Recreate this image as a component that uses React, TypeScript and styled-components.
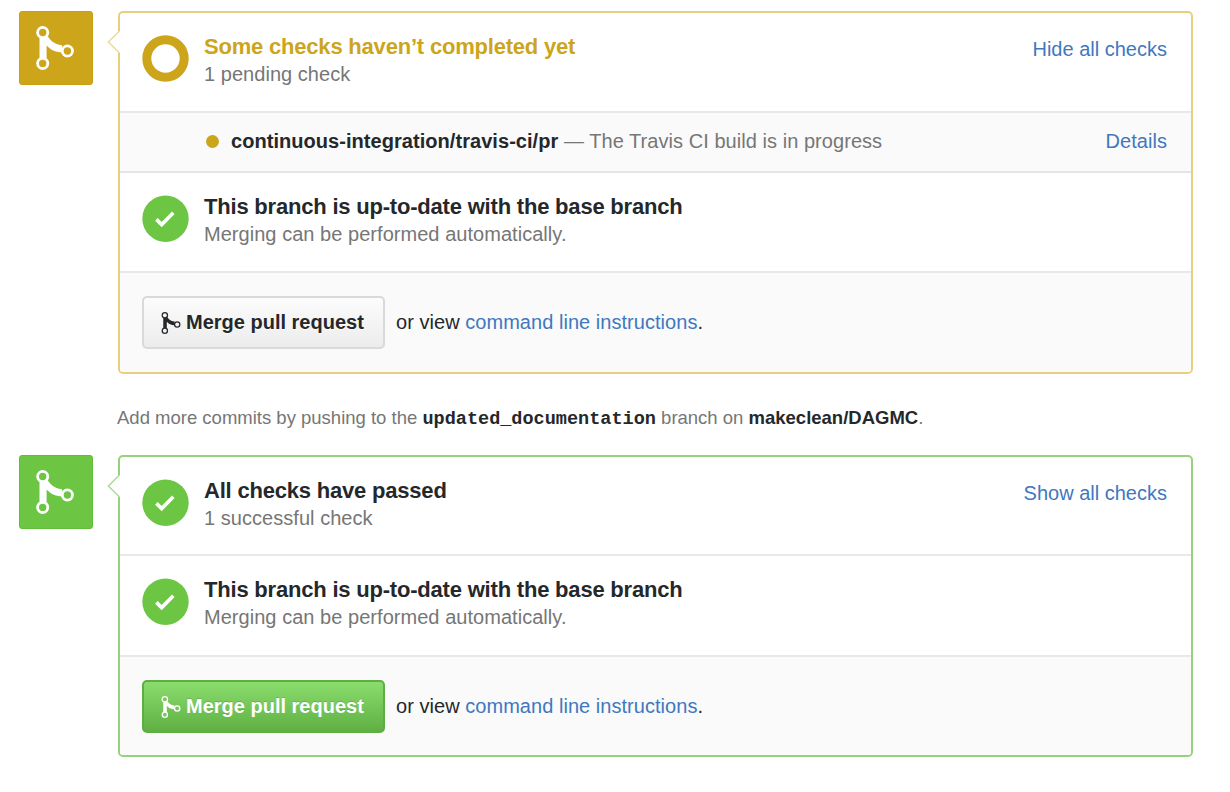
import React from "react";
import styled, { createGlobalStyle } from "styled-components";

const GlobalStyle = createGlobalStyle`
  * { box-sizing: border-box; }
  body {
    margin: 0;
    background: #fff;
    color: #25282b;
    font-family: "Liberation Sans", Arial, sans-serif;
    font-size: 20px;
  }
`;

type Tone = "pending" | "success";

const tones = {
  pending: { fill: "#cca51b", edge: "#c9a010", border: "#e6d07f", caret: "#ecdc9f" },
  success: { fill: "#6cc644", edge: "#60bf36", border: "#95d27b", caret: "#b0dc9e" },
};

const Page = styled.main`
  width: 1230px;
  height: 792px;
  padding: 11px 37px 0 19px;
  overflow: hidden;
`;

const Timeline = styled.section`
  display: flex;
  align-items: flex-start;
  gap: 25px;
`;

const Badge = styled.div<{ $tone: Tone }>`
  width: 74px;
  height: 74px;
  flex: none;
  padding: 14px 0 0 16px;
  border: 1px solid ${(p) => tones[p.$tone].edge};
  border-radius: 3px;
  background: ${(p) => tones[p.$tone].fill};
  color: #fff;
`;

const Panel = styled.div<{ $tone: Tone }>`
  position: relative;
  flex: 1;
  border: 2px solid ${(p) => tones[p.$tone].border};
  border-radius: 5px;
`;

const Caret = styled.svg`
  position: absolute;
  left: -14px;
  top: 16px;
  display: block;
`;

const Row = styled.div<{ $height: number }>`
  display: flex;
  height: ${(p) => p.$height}px;
  padding: 22px 24px 0 22px;
  border-bottom: 2px solid #e8e8e8;
`;

const CheckRow = styled.div`
  display: flex;
  align-items: center;
  height: 60px;
  padding: 0 24px 2px 86px;
  border-bottom: 2px solid #e5e5e5;
  background: #fafafa;
  color: #767676;
  letter-spacing: 0.05px;
  white-space: pre;
`;

const Dot = styled.i`
  width: 13px;
  height: 13px;
  margin-right: 12px;
  border-radius: 50%;
  background: #cca51b;
`;

const Actions = styled.div<{ $height: number }>`
  display: flex;
  align-items: flex-start;
  height: ${(p) => p.$height}px;
  padding: 23px 22px 0;
  border-radius: 0 0 3px 3px;
  background: #fafafa;
  line-height: 53px;
  letter-spacing: 0.04px;
  white-space: pre;
`;

const Status = styled.div`
  flex: 1;
  margin-top: -2px;
  padding-left: 15px;
`;

const Title = styled.h2<{ $pending?: boolean }>`
  margin: 0;
  font-size: 22px;
  line-height: 27px;
  letter-spacing: -0.2px;
  font-weight: bold;
  color: ${(p) => (p.$pending ? "#cca51b" : "#25282b")};
  white-space: nowrap;
`;

const Detail = styled.p`
  margin: 0;
  line-height: 28px;
  letter-spacing: 0.04px;
  color: #767676;
`;

const Link = styled.a`
  color: #4078c0;
  line-height: 28px;
  text-decoration: none;
`;

const ActionLink = styled(Link)`
  line-height: inherit;
`;

const Spacer = styled.span`
  flex: 1;
`;

const CheckName = styled.strong`
  color: #25282b;
`;

const Button = styled.button<{ $primary?: boolean }>`
  display: flex;
  align-items: center;
  width: 243px;
  height: 53px;
  margin: 0 11px 0 0;
  padding: 0 0 0 17px;
  border: 2px solid ${(p) => (p.$primary ? "#5fae43" : "#d9d9d9")};
  border-radius: 5px;
  background: ${(p) =>
    p.$primary ? "linear-gradient(#8add6d, #60b044)" : "linear-gradient(#fcfcfc, #ececec)"};
  color: ${(p) => (p.$primary ? "#fff" : "#25282b")};
  text-shadow: ${(p) => (p.$primary ? "0 -1px 0 rgba(0,0,0,.15)" : "0 1px 0 rgba(255,255,255,.9)")};
  font: bold 20px "Liberation Sans", Arial, sans-serif;
  white-space: nowrap;
`;

const ButtonLabel = styled.span`
  margin-left: 5px;
`;

const Hint = styled.p`
  height: 81px;
  margin: 0;
  padding: 31px 0 0 98px;
  font-size: 18.5px;
  line-height: 26px;
  color: #767676;
  white-space: pre;
`;

const BranchName = styled.code`
  font: bold 18.55px "Liberation Mono", monospace;
  color: #25282b;
`;

const Drawing = styled.svg`
  display: block;
  flex: none;
`;

const IconScope = styled.span`
  display: block;
`;

const mergeNodes = [
  [6.7, 6.5],
  [6.7, 37.4],
  [31.4, 25],
];

function MergeIcon({ small, hole }: { small?: boolean; hole: string }) {
  return (
    <Drawing width={small ? 20 : 38} height={small ? 22 : 44} viewBox="0 0 38 44">
      <path
        d="M3.5 7h6.4c3.5 7.3 8 11.3 16.1 12.2v7.1c-6.8-.2-11.6-2.6-15.4-6.9V37H3.5Z"
        fill="currentColor"
      />
      {mergeNodes.map(([cx, cy]) => (
        <React.Fragment key={`${cx}-${cy}`}>
          <circle cx={cx} cy={cy} r="6.5" fill="currentColor" />
          <circle cx={cx} cy={cy} r={small ? 3.9 : 3.7} fill={hole} />
        </React.Fragment>
      ))}
    </Drawing>
  );
}

function CheckIcon() {
  return (
    <Drawing width="47" height="47" viewBox="0 0 47 47">
      <circle cx="23.5" cy="23.7" r="23.2" fill="#6cc644" />
      <path d="m14.4 24.4 5.3 5.2 11.6-11.8" fill="none" stroke="#fff" strokeWidth="3.6" />
    </Drawing>
  );
}

function PendingIcon() {
  return (
    <Drawing width="47" height="47" viewBox="0 0 47 47">
      <circle cx="23.5" cy="23.5" r="18.7" fill="none" stroke="#cca51b" strokeWidth="9" />
    </Drawing>
  );
}

function StatusBadge({ tone }: { tone: Tone }) {
  return (
    <Badge $tone={tone}>
      <MergeIcon hole={tones[tone].fill} />
    </Badge>
  );
}

function PanelCaret({ tone }: { tone: Tone }) {
  return (
    <Caret width="14" height="25" viewBox="0 0 14 25">
      <path d="M14 2.5h-1L2.4 13 13 23.5h1Z" fill="#fff" />
      <path d="M13 2.5 2.4 13 13 23.5" fill="none" stroke={tones[tone].caret} strokeWidth="1.6" />
    </Caret>
  );
}

function BranchStatus({ height }: { height: number }) {
  return (
    <Row $height={height}>
      <CheckIcon />
      <Status>
        <Title>This branch is up-to-date with the base branch</Title>
        <Detail>Merging can be performed automatically.</Detail>
      </Status>
    </Row>
  );
}

function MergeActions({ primary, height }: { primary?: boolean; height: number }) {
  return (
    <Actions $height={height}>
      <Button $primary={primary}>
        <IconScope>
          <MergeIcon small hole={primary ? "#76c957" : "#f3f3f3"} />
        </IconScope>
        <ButtonLabel>Merge pull request</ButtonLabel>
      </Button>
      <span>or view </span>
      <ActionLink>command line instructions</ActionLink>
      <span>.</span>
    </Actions>
  );
}

export default function App() {
  return (
    <>
      <GlobalStyle />
      <Page>
        <Timeline>
          <StatusBadge tone="pending" />
          <Panel $tone="pending">
            <PanelCaret tone="pending" />
            <Row $height={100}>
              <PendingIcon />
              <Status>
                <Title $pending>Some checks haven’t completed yet</Title>
                <Detail>1 pending check</Detail>
              </Status>
              <Link>Hide all checks</Link>
            </Row>
            <CheckRow>
              <Dot />
              <CheckName>continuous-integration/travis-ci/pr</CheckName>
              <span> — The Travis CI build is in progress</span>
              <Spacer />
              <Link>Details</Link>
            </CheckRow>
            <BranchStatus height={100} />
            <MergeActions height={99} />
          </Panel>
        </Timeline>
        <Hint>
          <span>Add more commits by pushing to the </span>
          <BranchName>updated_documentation</BranchName>
          <span> branch on </span>
          <CheckName>makeclean/DAGMC</CheckName>
          <span>.</span>
        </Hint>
        <Timeline>
          <StatusBadge tone="success" />
          <Panel $tone="success">
            <PanelCaret tone="success" />
            <Row $height={99}>
              <CheckIcon />
              <Status>
                <Title>All checks have passed</Title>
                <Detail>1 successful check</Detail>
              </Status>
              <Link>Show all checks</Link>
            </Row>
            <BranchStatus height={101} />
            <MergeActions primary height={98} />
          </Panel>
        </Timeline>
      </Page>
    </>
  );
}
